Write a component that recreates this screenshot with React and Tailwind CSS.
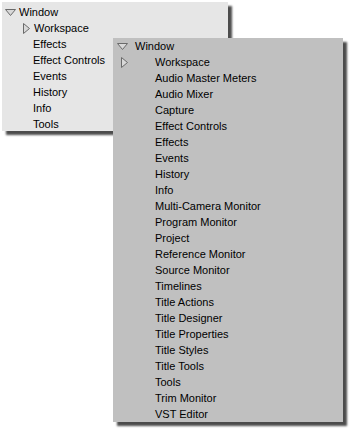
import React from "react";

// Two overlapping "Window" menus, classic Win2k look

const shortMenu = ["Effects", "Effect Controls", "Events", "History", "Info", "Tools"];

const fullMenu = [
  "Audio Master Meters",
  "Audio Mixer",
  "Capture",
  "Effect Controls",
  "Effects",
  "Events",
  "History",
  "Info",
  "Multi-Camera Monitor",
  "Program Monitor",
  "Project",
  "Reference Monitor",
  "Source Monitor",
  "Timelines",
  "Title Actions",
  "Title Designer",
  "Title Properties",
  "Title Styles",
  "Title Tools",
  "Tools",
  "Trim Monitor",
  "VST Editor",
];

function DownTri() {
  return (
    <svg width="11" height="7" viewBox="0 0 11 7" className="shrink-0">
      <path d="M0.5 0.5 L10.5 0.5 L5.5 6.5 Z" fill="#d8d8d8" stroke="#6a6a6a" strokeWidth="1" />
    </svg>
  );
}

function RightTri() {
  return (
    <svg width="7" height="11" viewBox="0 0 7 11" className="shrink-0">
      <path d="M0.5 0.5 L6.5 5.5 L0.5 10.5 Z" fill="#d8d8d8" stroke="#6a6a6a" strokeWidth="1" />
    </svg>
  );
}

export default function App() {
  return (
    <div className="relative w-[350px] h-[429px] bg-white overflow-hidden font-['Liberation_Sans',Arial,sans-serif] text-[11px] text-black">
      {/* small menu */}
      <div className="absolute left-[2px] top-[2px] w-[226px] h-[129px] pt-[2px] bg-[#e6e6e6] shadow-[4px_4px_2px_rgba(0,0,0,0.7)]">
        <div className="flex items-center h-4 pl-[3px] gap-[3px]">
          <DownTri />
          <span>Window</span>
        </div>
        <div className="flex items-center h-4 pl-[21px] gap-[4px]">
          <RightTri />
          <span>Workspace</span>
        </div>
        {shortMenu.map((item) => (
          <div key={item} className="flex items-center h-4 pl-[31px]">
            {item}
          </div>
        ))}
      </div>

      {/* full menu */}
      <div className="absolute left-[113px] top-[38px] w-[230px] h-[384px] bg-[#c0c0c0] shadow-[4px_4px_2px_rgba(0,0,0,0.7)]">
        <div className="flex items-center h-4 pl-[4px] gap-[7px]">
          <DownTri />
          <span>Window</span>
        </div>
        <div className="flex items-center h-4 pl-[8px]">
          <RightTri />
          <span className="ml-[27px]">Workspace</span>
        </div>
        {fullMenu.map((item) => (
          <div key={item} className="flex items-center h-4 pl-[42px]">
            {item}
          </div>
        ))}
      </div>
    </div>
  );
}
